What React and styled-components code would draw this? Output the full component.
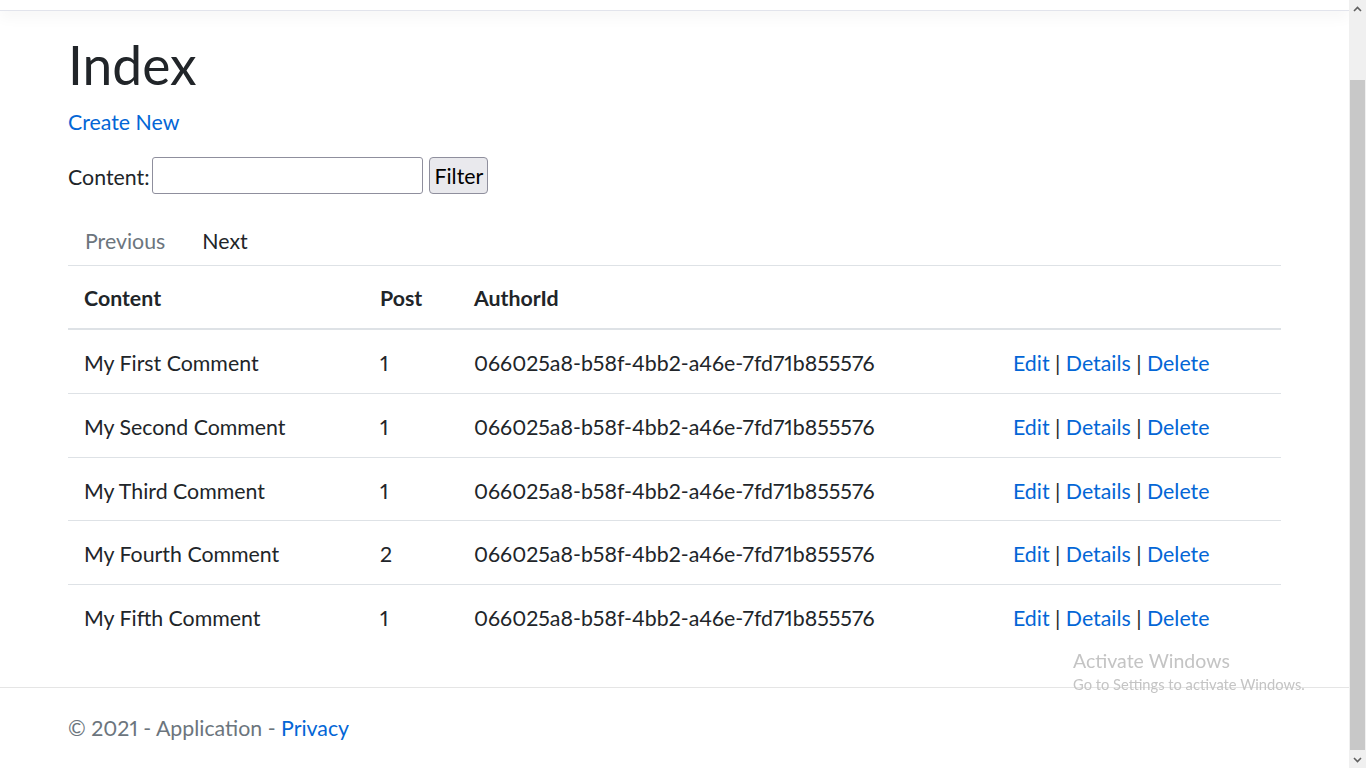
import React from "react";
import styled, { createGlobalStyle } from "styled-components";

const GlobalStyle = createGlobalStyle`
    html, body {
        margin: 0;
        padding: 0;
        height: 100%;
        overflow: hidden;
        background: #fff;
    }

    body {
        font-family: Lato, "Open Sans", sans-serif;
        font-size: 21.33px;
        line-height: 32px;
        color: #212529;
        font-variant-numeric: proportional-nums;
    }
`;

const Shell = styled.div`
    display: flex;
    height: 100vh;
`;

const Main = styled.div`
    flex: 1;
    display: flex;
    flex-direction: column;
    min-width: 0;
`;

const TopBar = styled.header`
    height: 10px;
    border-bottom: 1px solid #e2e4ec;
    box-shadow: 0 5px 15px rgba(0, 0, 0, 0.05);
`;

const Container = styled.main`
    flex: 1;
    padding: 21px 68px 0;
`;

const Title = styled.h1`
    margin: 0 0 10px;
    font-size: 53.33px;
    line-height: 64px;
    font-weight: 400;
`;

const Link = styled.a`
    color: #0366d6;
    text-decoration: none;
    cursor: pointer;
`;

const Paragraph = styled.p`
    margin: 0 0 19px;
`;

const FilterForm = styled.form`
    display: flex;
    align-items: center;
    height: 37px;
`;

const Label = styled.label`
    margin-right: 3px;
    padding-top: 3px;
`;

const TextInput = styled.input`
    box-sizing: border-box;
    width: 271px;
    height: 37px;
    border: 1px solid #8f8f9d;
    border-radius: 3px;
    padding: 0 4px;
    font: inherit;
`;

const Button = styled.button`
    box-sizing: border-box;
    height: 37px;
    margin-left: 6px;
    padding: 0 4px;
    background: #e9e9ed;
    border: 1px solid #8f8f9d;
    border-radius: 4px;
    font: inherit;
    color: #000;
`;

const Pager = styled.nav`
    display: flex;
    margin-top: 23px;
    padding: 8px 0;
`;

const PageLink = styled.a`
    padding: 0 20px 0 17px;
    color: ${(props) => (props.disabled ? "#6c757d" : "#212529")};
    text-decoration: none;
`;

const Table = styled.table`
    width: 100%;
    border-collapse: collapse;
    table-layout: fixed;
`;

const Th = styled.th`
    text-align: left;
    font-weight: 700;
    padding: 16px 16px 14px;
    border-top: 1px solid #dee2e6;
    border-bottom: 2px solid #dee2e6;
`;

const Td = styled.td`
    padding: 17px 16px 13.8px;
    border-top: 1px solid #dee2e6;
    white-space: nowrap;
`;

const Footer = styled.footer`
    border-top: 1px solid #e5e5e5;
    padding: 0 68px;
    line-height: 80px;
    color: #6c757d;
    white-space: nowrap;
`;

const Watermark = styled.div`
    position: fixed;
    left: 1073px;
    top: 648px;
    color: #c4c4c4;
    pointer-events: none;
`;

const WatermarkTitle = styled.div`
    font-size: 19.5px;
    line-height: 26px;
`;

const WatermarkText = styled.div`
    font-size: 14.7px;
    line-height: 18px;
    margin-top: 1px;
`;

const Scrollbar = styled.div`
    width: 17px;
    display: flex;
    flex-direction: column;
    background: #f0f0f0;
`;

const Arrow = styled.div`
    height: 17px;
    display: flex;
    align-items: center;
    justify-content: center;
    color: #606060;
`;

const Track = styled.div`
    flex: 1;
    padding: 63px 1px 1px;
    display: flex;
`;

const Thumb = styled.div`
    flex: 1;
    background: #c8c8c8;
`;

const comments = [
    { content: "My First Comment", post: 1 },
    { content: "My Second Comment", post: 1 },
    { content: "My Third Comment", post: 1 },
    { content: "My Fourth Comment", post: 2 },
    { content: "My Fifth Comment", post: 1 },
];

const authorId = "066025a8-b58f-4bb2-a46e-7fd71b855576";

const App = () => {
    return (
        <>
            <GlobalStyle />
            <Shell>
                <Main>
                    <TopBar />
                    <Container>
                        <Title>Index</Title>
                        <Paragraph>
                            <Link>Create New</Link>
                        </Paragraph>
                        <FilterForm onSubmit={(e) => e.preventDefault()}>
                            <Label>Content:</Label>
                            <TextInput type="text" />
                            <Button type="submit">Filter</Button>
                        </FilterForm>
                        <Pager>
                            <PageLink disabled>Previous</PageLink>
                            <PageLink>Next</PageLink>
                        </Pager>
                        <Table>
                            <colgroup>
                                <col style={{ width: "296px" }} />
                                <col style={{ width: "94px" }} />
                                <col style={{ width: "539px" }} />
                                <col />
                            </colgroup>
                            <thead>
                                <tr>
                                    <Th>Content</Th>
                                    <Th>Post</Th>
                                    <Th>AuthorId</Th>
                                    <Th></Th>
                                </tr>
                            </thead>
                            <tbody>
                                {comments.map((comment, index) => (
                                    <tr key={index}>
                                        <Td>{comment.content}</Td>
                                        <Td>{comment.post}</Td>
                                        <Td>{authorId}</Td>
                                        <Td>
                                            <Link>Edit</Link> |{" "}
                                            <Link>Details</Link> |{" "}
                                            <Link>Delete</Link>
                                        </Td>
                                    </tr>
                                ))}
                            </tbody>
                        </Table>
                    </Container>
                    <Footer>
                        © 2021 - Application - <Link>Privacy</Link>
                    </Footer>
                </Main>
                <Scrollbar>
                    <Arrow>
                        <svg width="9" height="6" viewBox="0 0 9 6">
                            <path
                                d="M1 5 L4.5 1.5 L8 5"
                                fill="none"
                                stroke="currentColor"
                                strokeWidth="1.6"
                            />
                        </svg>
                    </Arrow>
                    <Track>
                        <Thumb />
                    </Track>
                    <Arrow>
                        <svg width="9" height="6" viewBox="0 0 9 6">
                            <path
                                d="M1 1 L4.5 4.5 L8 1"
                                fill="none"
                                stroke="currentColor"
                                strokeWidth="1.6"
                            />
                        </svg>
                    </Arrow>
                </Scrollbar>
            </Shell>
            <Watermark>
                <WatermarkTitle>Activate Windows</WatermarkTitle>
                <WatermarkText>Go to Settings to activate Windows.</WatermarkText>
            </Watermark>
        </>
    );
};

export default App;
